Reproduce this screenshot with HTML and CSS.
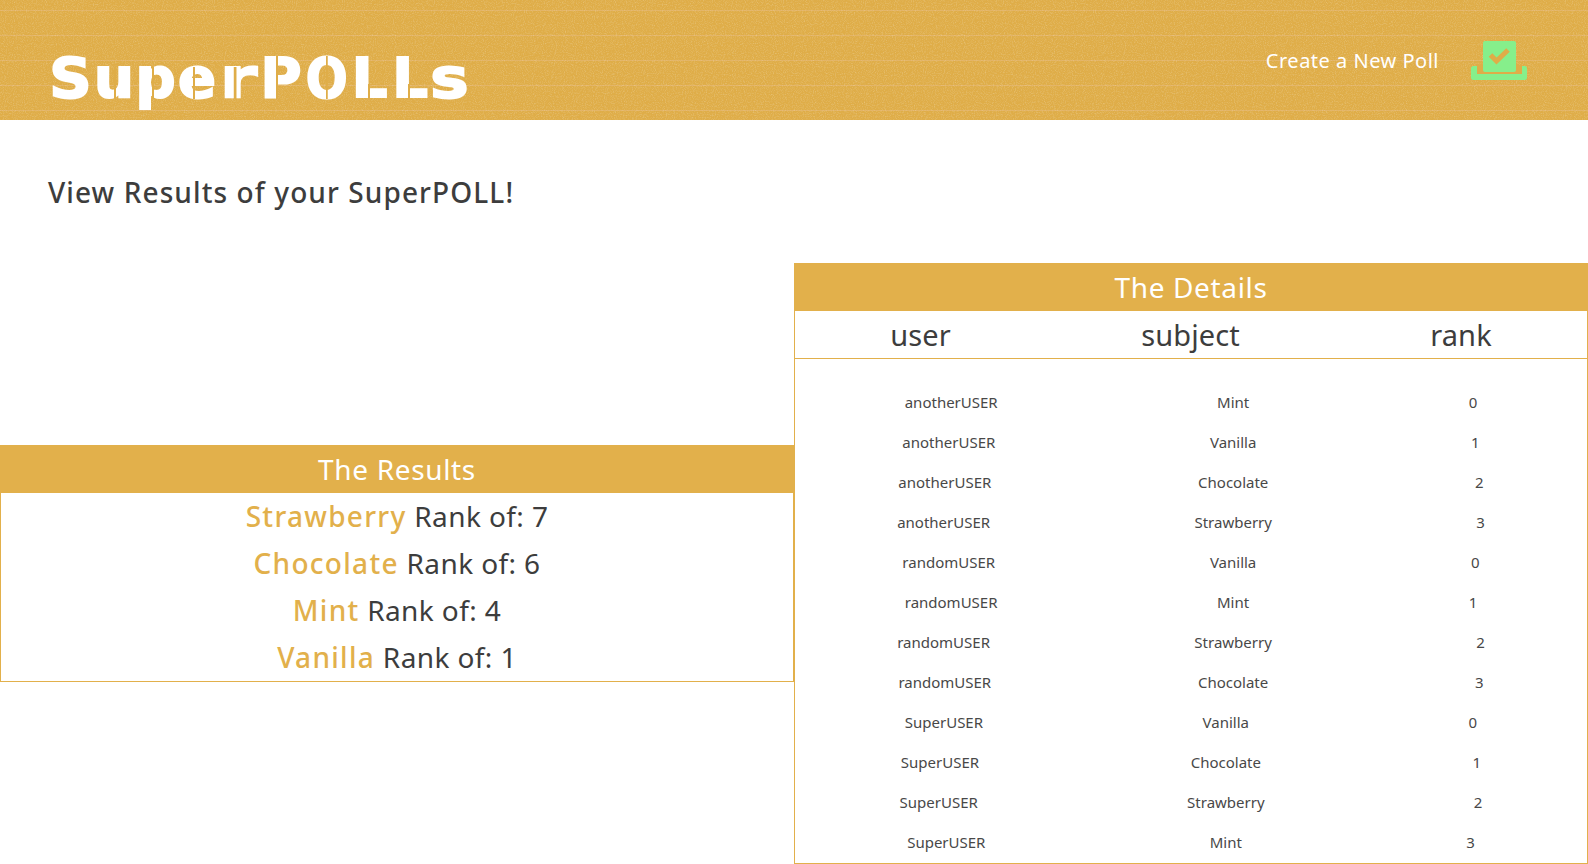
FILE: index.html

```html
<!DOCTYPE html>
<html lang="en">
  <head>
    <meta charset="UTF-8" />
    <title>SuperPOLLs</title>
    <link rel="stylesheet" href="styles.css">
  </head>
  <body>
    <header class="topbar">
      <!-- paper grain over the bar -->
      <svg class="topbar__grain" width="100%" height="100%">
        <filter id="grain">
          <feTurbulence type="fractalNoise" baseFrequency="0.9" numOctaves="2" seed="4"/>
          <feColorMatrix type="matrix" values="0 0 0 0 1  0 0 0 0 1  0 0 0 0 1  0 0 0 1.4 -0.62"/>
        </filter>
        <rect width="100%" height="100%" filter="url(#grain)"/>
      </svg>
      <h1 class="logo"><span class="l-s1">S</span><span class="l-u">u</span><span class="l-p">p</span><span class="l-e">e</span><span class="l-r">r</span><span class="l-cp">P</span><span class="l-o">O</span><span class="l-l1">L</span><span class="l-l2">L</span><span class="l-s2">s</span></h1>
      <a class="new-poll" href="#">
        <span>Create a New Poll</span>
        <svg class="new-poll__icon" viewBox="0 0 56 39" width="56" height="39">
          <rect x="0" y="25" width="56" height="14" rx="2.5" fill="#86ef8b"/>
          <rect x="6" y="24" width="45" height="9" fill="#dfad48"/>
          <rect x="12" y="0" width="33" height="31" rx="2" fill="#86ef8b"/>
          <path d="M19.5 14l6 6 11.5-11" fill="none" stroke="#dfad48" stroke-width="5"/>
        </svg>
      </a>
    </header>

    <h2 class="page-title">View Results of your SuperPOLL!</h2>

    <main class="panels">
      <section class="panel">
        <h3 class="panel__head">The Results</h3>
        <ul class="results">
          <li><span class="flavor">Strawberry</span> Rank of: 7</li>
          <li><span class="flavor">Chocolate</span> Rank of: 6</li>
          <li><span class="flavor">Mint</span> Rank of: 4</li>
          <li><span class="flavor">Vanilla</span> Rank of: 1</li>
        </ul>
      </section>

      <section class="panel">
        <h3 class="panel__head">The Details</h3>
        <div class="columns">
          <span>user</span>
          <span>subject</span>
          <span>rank</span>
        </div>
        <div class="details">
          <div class="row"><span>anotherUSER</span><span>Mint</span><span>0</span></div>
          <div class="row"><span>anotherUSER</span><span>Vanilla</span><span>1</span></div>
          <div class="row"><span>anotherUSER</span><span>Chocolate</span><span>2</span></div>
          <div class="row"><span>anotherUSER</span><span>Strawberry</span><span>3</span></div>
          <div class="row"><span>randomUSER</span><span>Vanilla</span><span>0</span></div>
          <div class="row"><span>randomUSER</span><span>Mint</span><span>1</span></div>
          <div class="row"><span>randomUSER</span><span>Strawberry</span><span>2</span></div>
          <div class="row"><span>randomUSER</span><span>Chocolate</span><span>3</span></div>
          <div class="row"><span>SuperUSER</span><span>Vanilla</span><span>0</span></div>
          <div class="row"><span>SuperUSER</span><span>Chocolate</span><span>1</span></div>
          <div class="row"><span>SuperUSER</span><span>Strawberry</span><span>2</span></div>
          <div class="row"><span>SuperUSER</span><span>Mint</span><span>3</span></div>
        </div>
      </section>
    </main>
  </body>
</html>
```

FILE: styles.css

```css
* {
  margin: 0;
  padding: 0;
  box-sizing: border-box;
}

body {
  font-family: "Noto Sans", sans-serif;
  color: #3d3d3d;
  background: #fff;
  overflow-x: hidden;
}

.topbar {
  position: relative;
  height: 120px;
  display: flex;
  justify-content: space-between;
  align-items: flex-start;
  padding: 41px 61px 0 48px;
  background-color: #dfad48;
  background-image: repeating-linear-gradient(to bottom, transparent 0, transparent 10px, #e3b466 10px, #e3b466 11px, transparent 11px, transparent 25px);
}

.topbar__grain {
  position: absolute;
  top: 0;
  left: 0;
  opacity: 0.35;
}

.logo {
  position: relative;
  display: flex;
  margin-top: 5px;
  font-family: "DejaVu Sans", sans-serif;
  font-weight: 700;
  font-size: 56px;
  line-height: 64px;
  color: #fff;
  -webkit-text-stroke: 2px #fff;
}

.logo span {
  position: relative;
  display: block;
  text-align: center;
}

/* each letter gets its own cell so the row keeps the stencil face's even rhythm */
.l-s1 { width: 45px; transform: scaleX(1.05); }
.l-u { width: 42px; }
.l-p { width: 41px; }
.l-e { width: 42px; }
.l-r { width: 41px; transform: scaleX(1.35); }
.l-cp { width: 44px; }
.l-o { width: 46px; transform: scaleX(0.88); }
.l-l1 { width: 41px; }
.l-l2 { width: 40px; }
.l-s2 { width: 39px; transform: scaleX(1.15); }

/* stencil cuts through the letters */
.l-u::after,
.l-p::after,
.l-e::after,
.l-r::after,
.l-cp::after,
.l-o::after,
.l-l1::after,
.l-l2::after {
  content: "";
  position: absolute;
  top: 21px;
  height: 32px;
  width: 2px;
  background: #dfad48;
}

.l-u::after { left: 50%; }
.l-p::after { left: 42%; }
.l-e::after { left: 40%; }
.l-r::after { left: 42%; width: 1.5px; }
.l-cp::after { left: 38%; top: 10px; height: 43px; }
.l-o::after { left: 50%; top: 10px; height: 43px; }
.l-l1::after { left: 46%; top: 38px; height: 15px; }
.l-l2::after { left: 46%; top: 38px; height: 15px; }

.new-poll {
  position: relative;
  display: flex;
  align-items: center;
  gap: 32px;
  color: #fff;
  font-size: 20px;
  letter-spacing: 0.5px;
  text-decoration: none;
}

.page-title {
  font-size: 28px;
  font-weight: 500;
  letter-spacing: 1.1px;
  line-height: 40px;
  padding: 52px 48px 0;
  height: 143px;
}

.panels {
  display: flex;
  align-items: center;
}

.panel {
  width: 50%;
  border: 1px solid #e2b04b;
}

.panel__head {
  height: 48px;
  margin: -1px -1px 0;
  background: #e2b04b;
  color: #fff;
  font-size: 28px;
  font-weight: 400;
  letter-spacing: 0.65px;
  line-height: 48px;
  text-align: center;
}

.results {
  list-style: none;
}

.results li {
  height: 47px;
  line-height: 47px;
  font-size: 28px;
  letter-spacing: 0.4px;
  text-align: center;
}

.flavor {
  color: #e2b04b;
  font-weight: 500;
  letter-spacing: 1.3px;
}

.columns {
  display: flex;
  justify-content: space-around;
  height: 48px;
  line-height: 48px;
  font-size: 29px;
  letter-spacing: 0.1px;
  border-bottom: 1px solid #e2b04b;
}

.details {
  padding: 23px 0 1px;
}

.row {
  display: flex;
  justify-content: space-around;
  height: 40px;
  line-height: 40px;
  font-size: 15px;
  color: #484848;
}
```
